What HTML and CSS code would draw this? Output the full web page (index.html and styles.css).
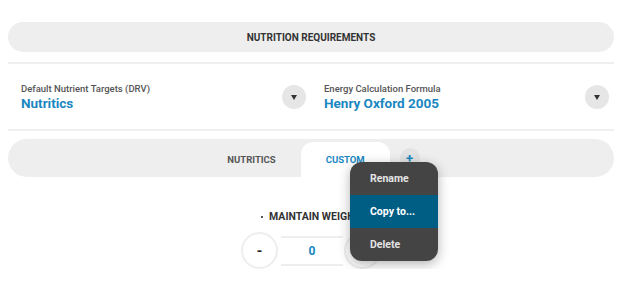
FILE: index.html
```html
<!DOCTYPE html>
<html>
<head>
<meta charset="utf-8">
<link rel="stylesheet" href="styles.css">
</head>
<body>
<div class="page">
  <div class="title-bar">NUTRITION REQUIREMENTS</div>
  <div class="selects">
    <div class="select">
      <div class="select-text">
        <div class="select-label">Default Nutrient Targets (DRV)</div>
        <div class="select-value">Nutritics</div>
      </div>
      <div class="drop"><span class="tri"></span></div>
    </div>
    <div class="select">
      <div class="select-text">
        <div class="select-label">Energy Calculation Formula</div>
        <div class="select-value">Henry Oxford 2005</div>
      </div>
      <div class="drop"><span class="tri"></span></div>
    </div>
  </div>
  <div class="tabs">
    <div class="tab">NUTRITICS</div>
    <div class="tab active">CUSTOM</div>
    <div class="add">+</div>
    <div class="menu">
      <div class="menu-item">Rename</div>
      <div class="menu-item sel">Copy to...</div>
      <div class="menu-item">Delete</div>
    </div>
  </div>
  <div class="goal">
    <div class="goal-title"><span class="dot"></span>MAINTAIN WEIGHT</div>
    <div class="stepper">
      <div class="step-btn">-</div>
      <div class="step-val">0</div>
      <div class="step-btn">+</div>
    </div>
  </div>
</div>
</body>
</html>
```
FILE: styles.css
```css
* { box-sizing: border-box; }
body {
  margin: 8px;
  font-family: Roboto, "Liberation Sans", sans-serif;
  background: #fff;
  color: #333;
}
.page {
  width: 606px;
  padding-top: 14px;
}
.title-bar {
  height: 30px;
  border-radius: 15px;
  background: #eeeeee;
  display: flex;
  align-items: center;
  justify-content: center;
  font-size: 10px;
  font-weight: 700;
  color: #333;
}
.selects {
  margin-top: 10px;
  border-top: 2px solid #efefef;
  border-bottom: 2px solid #efefef;
  height: 69px;
  display: grid;
  grid-template-columns: 1fr 1fr;
  column-gap: 18px;
  padding: 0 5px 0 13px;
}
.select {
  display: flex;
  align-items: center;
  justify-content: space-between;
}
.select-text { padding-top: 0; }
.select-label {
  font-size: 9.5px;
  font-weight: 500;
  color: #555;
  line-height: 12px;
}
.select-value {
  font-size: 13.5px;
  font-weight: 700;
  color: #1a87c2;
  line-height: 16px;
}
.drop {
  width: 24px;
  height: 24px;
  border-radius: 50%;
  background: #e6e6e6;
  display: flex;
  align-items: center;
  justify-content: center;
}
.tri {
  width: 0;
  height: 0;
  border-left: 3px solid transparent;
  border-right: 3px solid transparent;
  border-top: 5px solid #333;
  margin-top: 1px;
}
.tabs {
  position: relative;
  margin-top: 8px;
  height: 38px;
  border-radius: 19px;
  background: #eeeeee;
  display: flex;
  align-items: flex-end;
  justify-content: center;
}
.tab {
  height: 35px;
  padding: 0 25px;
  display: flex;
  align-items: center;
  font-size: 9.5px;
  font-weight: 700;
  color: #555;
  border-radius: 12px 12px 0 0;
}
.tab.active {
  background: #fff;
  color: #1a87c2;
}
.add {
  align-self: center;
  margin-left: 10px;
  width: 20px;
  height: 20px;
  border-radius: 50%;
  background: #e2e2e2;
  color: #1a87c2;
  font-size: 13px;
  font-weight: 700;
  display: flex;
  align-items: center;
  justify-content: center;
  line-height: 1;
}
.menu {
  position: absolute;
  left: 342px;
  top: 23px;
  width: 88px;
  background: #444;
  border-radius: 12px;
  overflow: hidden;
  box-shadow: 0 3px 12px rgba(0,0,0,0.3);
  z-index: 5;
}
.menu-item {
  height: 33px;
  display: flex;
  align-items: center;
  padding-left: 20px;
  font-size: 10.5px;
  font-weight: 700;
  color: #e4e4e4;
}
.menu-item.sel {
  background: #005d84;
  color: #fff;
}
.goal {
  display: flex;
  flex-direction: column;
  align-items: center;
  padding-top: 34px;
}
.goal-title {
  display: flex;
  align-items: center;
  font-size: 10.5px;
  font-weight: 700;
  color: #333;
  line-height: 12px;
}
.dot {
  width: 2px;
  height: 2px;
  background: #555;
  margin-right: 6px;
}
.stepper {
  margin-top: 9px;
  display: flex;
  align-items: center;
}
.step-btn {
  width: 37px;
  height: 37px;
  border-radius: 50%;
  border: 2px solid #eeeeee;
  display: flex;
  align-items: center;
  justify-content: center;
  font-size: 14px;
  font-weight: 700;
  color: #222;
}
.step-val {
  width: 62px;
  height: 30px;
  margin: 0 1px 0 3px;
  border-top: 2px solid #eeeeee;
  border-bottom: 2px solid #eeeeee;
  display: flex;
  align-items: center;
  justify-content: center;
  font-size: 12px;
  font-weight: 700;
  color: #1a87c2;
}
```
